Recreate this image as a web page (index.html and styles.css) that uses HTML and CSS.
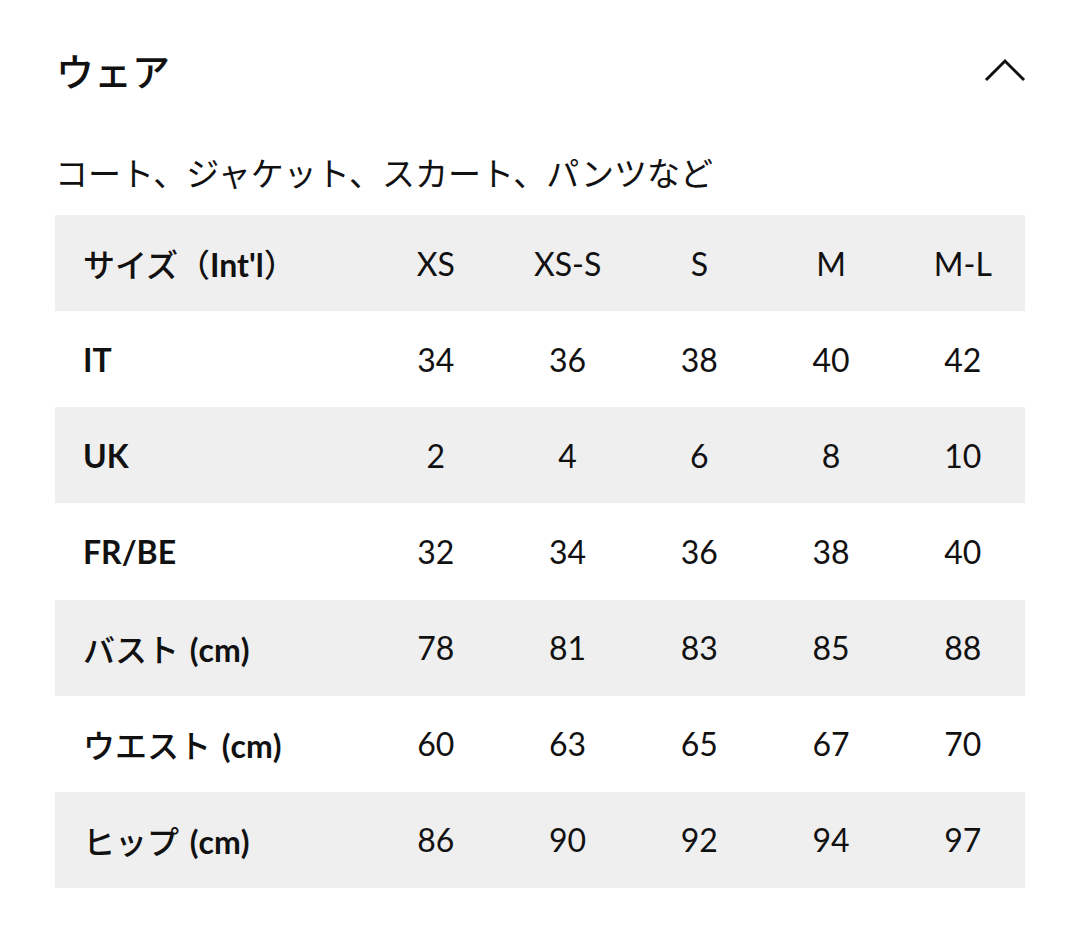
FILE: index.html
```html
<!DOCTYPE html>
<html lang="ja">
<head>
<meta charset="utf-8">
<title>ウェア</title>
<link rel="stylesheet" href="styles.css">
</head>
<body>
<section class="panel">
  <header class="panel-head">
    <h2 class="panel-title">ウェア</h2>
    <svg class="chevron" width="42" height="26" viewBox="0 0 42 26" aria-hidden="true">
      <polyline points="2,23 21,4 40,23" fill="none" stroke="#111" stroke-width="3"/>
    </svg>
  </header>
  <p class="panel-sub">コート、ジャケット、スカート、パンツなど</p>
  <div class="size-table">
    <div class="row shade">
      <div class="label"><span class="jp">サイズ（</span>Int'l<span class="jp">）</span></div>
      <div class="cell">XS</div><div class="cell">XS-S</div><div class="cell">S</div><div class="cell">M</div><div class="cell">M-L</div>
    </div>
    <div class="row">
      <div class="label">IT</div>
      <div class="cell">34</div><div class="cell">36</div><div class="cell">38</div><div class="cell">40</div><div class="cell">42</div>
    </div>
    <div class="row shade">
      <div class="label">UK</div>
      <div class="cell">2</div><div class="cell">4</div><div class="cell">6</div><div class="cell">8</div><div class="cell">10</div>
    </div>
    <div class="row">
      <div class="label">FR/BE</div>
      <div class="cell">32</div><div class="cell">34</div><div class="cell">36</div><div class="cell">38</div><div class="cell">40</div>
    </div>
    <div class="row shade">
      <div class="label"><span class="jp">バスト</span> (cm)</div>
      <div class="cell">78</div><div class="cell">81</div><div class="cell">83</div><div class="cell">85</div><div class="cell">88</div>
    </div>
    <div class="row">
      <div class="label"><span class="jp">ウエスト</span> (cm)</div>
      <div class="cell">60</div><div class="cell">63</div><div class="cell">65</div><div class="cell">67</div><div class="cell">70</div>
    </div>
    <div class="row shade">
      <div class="label"><span class="jp">ヒップ</span> (cm)</div>
      <div class="cell">86</div><div class="cell">90</div><div class="cell">92</div><div class="cell">94</div><div class="cell">97</div>
    </div>
  </div>
</section>
</body>
</html>
```

FILE: styles.css
```css
html, body {
  margin: 0;
  padding: 0;
  background: #ffffff;
}

body {
  font-family: "Lato", "Noto Sans CJK JP", sans-serif;
  color: #111111;
}

.panel {
  width: 970px;
  padding-left: 55px;
}

.panel-head {
  height: 140px;
  display: flex;
  align-items: center;
  justify-content: space-between;
}

.panel-title {
  margin: 0 0 0 1px;
  font-family: "Noto Sans CJK JP", sans-serif;
  font-size: 38px;
  font-weight: 500;
  line-height: 1;
}

.chevron {
  display: block;
  margin-right: -1px;
}

.panel-sub {
  margin: 0 0 19px 0;
  padding-top: 8px;
  font-family: "Noto Sans CJK JP", sans-serif;
  font-size: 33px;
  font-weight: 400;
  line-height: 48px;
}

.size-table {
  display: flex;
  flex-direction: column;
}

.row {
  height: 96.15px;
  display: grid;
  grid-template-columns: 315px repeat(5, 131.75px);
  align-items: center;
  font-size: 32px;
}

.row.shade {
  background: #efefef;
}

.label {
  padding-left: 28px;
  font-weight: 700;
  white-space: nowrap;
  word-spacing: 3px;
}

.label .jp {
  font-family: "Noto Sans CJK JP", sans-serif;
  font-weight: 500;
}

.cell {
  text-align: center;
  font-weight: 400;
}
```
